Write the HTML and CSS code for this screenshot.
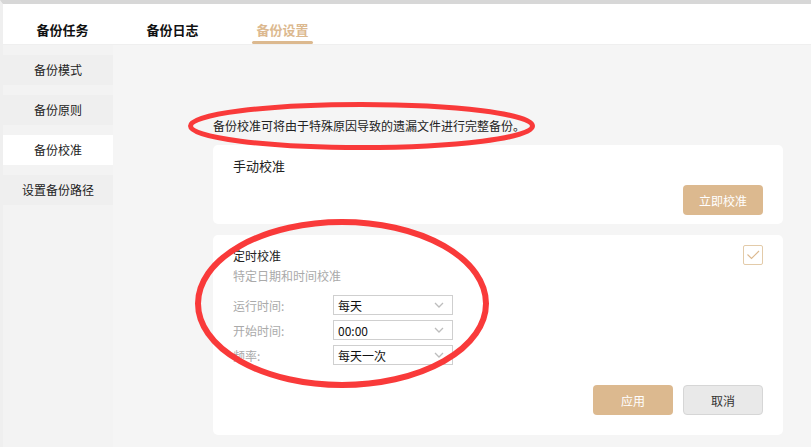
FILE: index.html
```html
<!DOCTYPE html>
<html lang="zh">
<head>
<meta charset="utf-8">
<title>备份设置</title>
<link rel="stylesheet" href="styles.css">
</head>
<body>
<div class="app">
  <div class="header">
    <div class="tab"><span class="tab-text">备份任务</span><span class="tab-line"></span></div>
    <div class="tab"><span class="tab-text">备份日志</span><span class="tab-line"></span></div>
    <div class="tab active"><span class="tab-text">备份设置</span><span class="tab-line"></span></div>
  </div>
  <div class="main">
    <div class="sidebar">
      <div class="side-item">备份模式</div>
      <div class="side-item">备份原则</div>
      <div class="side-item active">备份校准</div>
      <div class="side-item">设置备份路径</div>
    </div>
    <div class="content">
      <div class="desc">备份校准可将由于特殊原因导致的遗漏文件进行完整备份。</div>
      <div class="card card-manual">
        <div class="card-title">手动校准</div>
        <div class="btn-row">
          <button class="btn btn-primary">立即校准</button>
        </div>
      </div>
      <div class="card card-timed">
        <div class="timed-head">
          <div class="timed-texts">
            <div class="timed-title">定时校准</div>
            <div class="timed-sub">特定日期和时间校准</div>
          </div>
          <div class="checkbox">
            <svg width="14" height="10" viewBox="0 0 14 10"><path d="M1.5 4.5 L5.5 8.5 L13 1" fill="none" stroke="#dcb98f" stroke-width="1.1"/></svg>
          </div>
        </div>
        <div class="form">
          <div class="form-row">
            <span class="label">运行时间:</span>
            <div class="select"><span>每天</span><svg class="chev" width="10" height="6" viewBox="0 0 10 6"><path d="M1 1 L5 5 L9 1" fill="none" stroke="#bdbdbd" stroke-width="1.3"/></svg></div>
          </div>
          <div class="form-row">
            <span class="label">开始时间:</span>
            <div class="select"><span>00:00</span><svg class="chev" width="10" height="6" viewBox="0 0 10 6"><path d="M1 1 L5 5 L9 1" fill="none" stroke="#bdbdbd" stroke-width="1.3"/></svg></div>
          </div>
          <div class="form-row">
            <span class="label">频率:</span>
            <div class="select"><span>每天一次</span><svg class="chev" width="10" height="6" viewBox="0 0 10 6"><path d="M1 1 L5 5 L9 1" fill="none" stroke="#bdbdbd" stroke-width="1.3"/></svg></div>
          </div>
        </div>
        <div class="btn-row btn-row-2">
          <button class="btn btn-primary">应用</button>
          <button class="btn btn-default">取消</button>
        </div>
      </div>
    </div>
  </div>
  <svg class="marks" width="811" height="447" viewBox="0 0 811 447">
    <ellipse cx="361.5" cy="126" rx="171" ry="21.5" fill="none" stroke="#f93a3a" stroke-width="5"/>
    <ellipse cx="342" cy="303.5" rx="144" ry="81.5" fill="none" stroke="#f93a3a" stroke-width="6"/>
  </svg>
</div>
</body>
</html>
```
FILE: styles.css
```css
* { box-sizing: border-box; }
html, body {
  margin: 0;
  padding: 0;
  width: 811px;
  height: 447px;
  overflow: hidden;
  background: #f5f5f5;
  font-family: "Noto Sans CJK SC", "Noto Sans", sans-serif;
  color: #222;
}
.app {
  position: relative;
  width: 811px;
  height: 447px;
  border-top: 4px solid #d7d7d7;
  border-left: 3px solid #efefef;
  display: flex;
  flex-direction: column;
}
.header {
  height: 40px;
  background: #fff;
  display: flex;
  padding-left: 29px;
  gap: 49px;
  flex-shrink: 0;
}
.tab {
  width: 61px;
  height: 40px;
  display: flex;
  flex-direction: column;
  align-items: center;
  justify-content: space-between;
}
.tab-text {
  padding-top: 17px;
  font-size: 13px;
  line-height: 18px;
  font-weight: bold;
  color: #111;
}
.tab-line {
  width: 61px;
  height: 3px;
  border-radius: 2px;
  background: transparent;
}
.tab.active .tab-text { color: #dcb98f; }
.tab.active .tab-line { background: #dcb98f; }

.main {
  flex: 1;
  display: flex;
  border-top: 1px solid #efefef;
}
.sidebar {
  width: 110px;
  background: #f3f3f3;
  padding-top: 10px;
  display: flex;
  flex-direction: column;
  gap: 10px;
}
.side-item {
  height: 30px;
  background: #efefef;
  font-size: 12px;
  line-height: 30px;
  text-align: center;
  color: #222;
}
.side-item.active { background: #fff; }

.content {
  flex: 1;
  padding: 0 28px 0 100px;
}
.desc {
  margin-top: 73px;
  font-size: 12px;
  line-height: 16px;
  color: #222;
}
.card {
  background: #fff;
  border-radius: 5px;
  padding: 0 20px;
}
.card-manual {
  margin-top: 11px;
  height: 79px;
  padding-top: 12px;
}
.card-title {
  font-size: 13px;
  line-height: 18px;
  color: #222;
}
.btn-row {
  display: flex;
  justify-content: flex-end;
  gap: 10px;
  margin-top: 10px;
}
.btn {
  width: 80px;
  height: 30px;
  border-radius: 4px;
  font-family: inherit;
  font-size: 12px;
  border: none;
  padding: 0;
}
.btn-primary {
  background: #dcb98f;
  color: #fff;
}
.btn-default {
  background: #e9e9e9;
  border: 1px solid #d6d6d6;
  color: #333;
}
.card-timed {
  margin-top: 11px;
  height: 200px;
  padding-top: 10px;
}
.timed-head {
  display: flex;
  justify-content: space-between;
  align-items: flex-start;
}
.timed-title {
  margin-top: 3px;
  font-size: 12px;
  line-height: 16px;
  color: #222;
}
.timed-sub {
  margin-top: 4px;
  font-size: 12px;
  line-height: 16px;
  color: #aaa;
}
.checkbox {
  width: 20px;
  height: 20px;
  border: 1px solid #e3cba9;
  border-radius: 2px;
  display: flex;
  align-items: center;
  justify-content: center;
}
.form {
  margin-top: 11px;
  display: flex;
  flex-direction: column;
  gap: 5px;
}
.form-row {
  display: flex;
  align-items: center;
  height: 20px;
}
.label {
  width: 100px;
  font-size: 12px;
  color: #aaa;
}
.select {
  width: 120px;
  height: 20px;
  border: 1px solid #cfcfcf;
  display: flex;
  align-items: center;
  justify-content: space-between;
  padding: 0 8px 0 4px;
  font-size: 12px;
  color: #111;
}
.btn-row-2 { margin-top: 20px; }
.marks {
  position: absolute;
  top: -4px;
  left: -3px;
  pointer-events: none;
}
```
